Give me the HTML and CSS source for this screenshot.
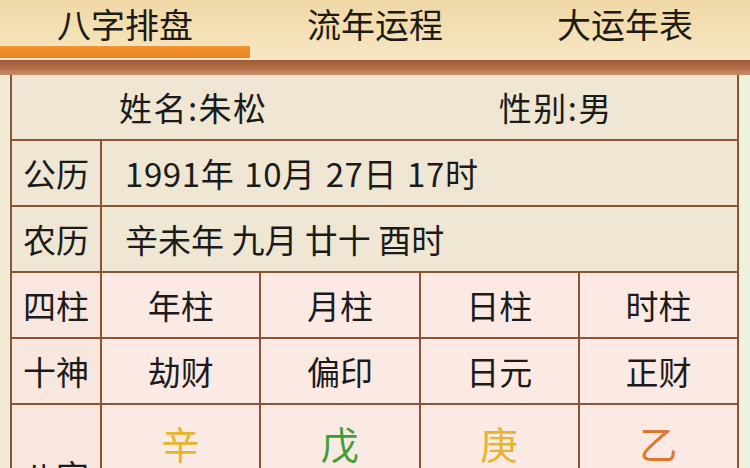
FILE: index.html
```html
<!DOCTYPE html>
<html lang="zh-CN">
<head>
<meta charset="utf-8">
<title>八字排盘</title>
<link rel="stylesheet" href="styles.css">
</head>
<body>
<nav class="tabs">
  <div class="tab active">八字排盘</div>
  <div class="tab">流年运程</div>
  <div class="tab">大运年表</div>
</nav>
<div class="band"></div>
<main class="frame">
  <div class="grid">
    <div class="cell name-row">
      <span class="half">姓名:朱松</span>
      <span class="half">性别:男</span>
    </div>
    <div class="cell label">公历</div>
    <div class="cell value date">1991年 10月 27日 17时</div>
    <div class="cell label">农历</div>
    <div class="cell value">辛未年 九月 廿十 酉时</div>

    <div class="cell label pink">四柱</div>
    <div class="cell pink">年柱</div>
    <div class="cell pink">月柱</div>
    <div class="cell pink">日柱</div>
    <div class="cell pink">时柱</div>

    <div class="cell label pink">十神</div>
    <div class="cell pink">劫财</div>
    <div class="cell pink">偏印</div>
    <div class="cell pink">日元</div>
    <div class="cell pink">正财</div>

    <div class="cell label pink tall">八字</div>
    <div class="cell pink tall stem"><span class="metal">辛</span></div>
    <div class="cell pink tall stem"><span class="earth">戊</span></div>
    <div class="cell pink tall stem"><span class="metal">庚</span></div>
    <div class="cell pink tall stem"><span class="wood">乙</span></div>
    <div class="watermark">下载</div>
  </div>
</main>
</body>
</html>
```

FILE: styles.css
```css
html, body {
  margin: 0;
  padding: 0;
}
body {
  width: 750px;
  height: 468px;
  overflow: hidden;
  background: linear-gradient(90deg, #f1e9d3 0, #f3ecd8 10px, #f3ecd8 738px, #eef2de 742px, #edf3e0 100%);
  font-family: "Noto Sans CJK SC", "Noto Sans", sans-serif;
  color: #1b1b1b;
}
.tabs {
  display: flex;
  height: 60px;
  background: linear-gradient(#f0d8a6, #f7e7c3);
}
.tab {
  flex: 1;
  position: relative;
  text-align: center;
  font-size: 34px;
  line-height: 48px;
  color: #1e1a14;
}
.tab.active::after {
  content: "";
  position: absolute;
  left: 0;
  right: 0;
  top: 46px;
  height: 12px;
  background: linear-gradient(#f4922e, #ec8524);
}
.band {
  height: 15px;
  background: linear-gradient(#9e5c38, #b06a46 45%, #c98c6a);
}
.frame {
  padding-left: 10px;
}
.grid {
  position: relative;
  width: 725px;
  display: grid;
  grid-template-columns: 88px repeat(4, 1fr);
  grid-auto-rows: 64px;
  gap: 2px;
  background: #8a5535;
  border: 2px solid #8a5535;
  border-top: 0;
}
.cell {
  background: #efe7d4;
  display: flex;
  align-items: center;
  justify-content: center;
  font-size: 33px;
  font-weight: 400;
}
.name-row {
  grid-column: 1 / -1;
}
.half {
  flex: 1;
  text-align: center;
  font-size: 33px;
  letter-spacing: 1.5px;
}
.value {
  grid-column: 2 / -1;
  justify-content: flex-start;
  padding-left: 23px;
}
.date {
  letter-spacing: 0.6px;
  word-spacing: 2px;
}
.pink {
  background: #fbe9e4;
}
.label.pink {
  background: #f8e7df;
}
.tall {
  height: 140px;
}
.stem {
  align-items: flex-start;
  font-size: 38px;
  padding-top: 10px;
}
.metal { color: #e6b52c; }
.earth { color: #3d9f35; }
.wood { color: #e2762e; }
.watermark {
  position: absolute;
  left: 215px;
  top: 424px;
  font-size: 54px;
  font-weight: bold;
  color: rgba(160, 130, 125, 0.16);
  letter-spacing: 40px;
}
```
